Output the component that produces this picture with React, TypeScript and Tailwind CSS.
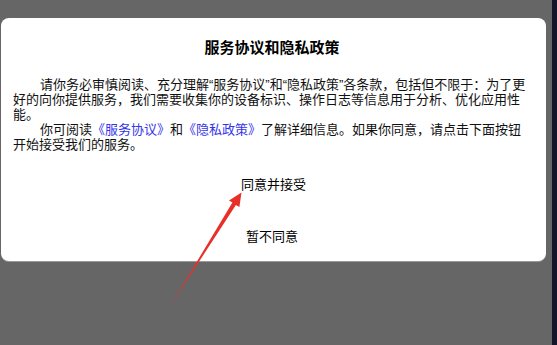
const font = { fontFamily: '"Liberation Sans", "Noto Sans CJK SC", sans-serif' };

function Arrow() {
  // red annotation arrow drawn over the dialog
  return (
    <svg
      className="pointer-events-none absolute left-0 top-0"
      width={557}
      height={345}
      viewBox="0 0 557 345"
    >
      <polygon
        points="170.5,305.5 232.4,202.6 229,200.5 241.5,192.5 239.4,207 235.9,204.9"
        fill="#e8302a"
      />
    </svg>
  );
}

export default function App() {
  return (
    <div
      className="relative flex h-[345px] w-[557px] overflow-hidden bg-[#666666]"
      style={font}
    >
      <div className="flex-1 pl-[1px] pt-[18px]">
        <div className="w-[545px] rounded-[8px] bg-white pb-[14px] pl-[12px] pr-[15px] pt-[20px] shadow-[0_1px_0_#9a9a9a]">
          <h2 className="text-center text-[15px] font-bold leading-[20px] text-black">
            服务协议和隐私政策
          </h2>
          <div className="mt-[19px] text-[13px] leading-[15px] text-[#111]">
            <p className="indent-[27px]">
              请你务必审慎阅读、充分理解“服务协议”和“隐私政策”各条款，包括但不限于：为了更好的向你提供服务，我们需要收集你的设备标识、操作日志等信息用于分析、优化应用性能。
            </p>
            <p className="indent-[27px]">
              你可阅读
              <span className="text-[#3434e8]">《服务协议》</span>和
              <span className="text-[#3434e8]">《隐私政策》</span>
              了解详细信息。如果你同意，请点击下面按钮开始接受我们的服务。
            </p>
          </div>
          <div className="mt-[23px] flex flex-col items-center text-[13px] leading-[20px] text-black">
            <button type="button" className="pl-[3px]">
              同意并接受
            </button>
            <button type="button" className="mt-[32px]">
              暂不同意
            </button>
          </div>
        </div>
      </div>
      <div className="w-[5px] bg-[#15152a]" />
      <Arrow />
    </div>
  );
}
